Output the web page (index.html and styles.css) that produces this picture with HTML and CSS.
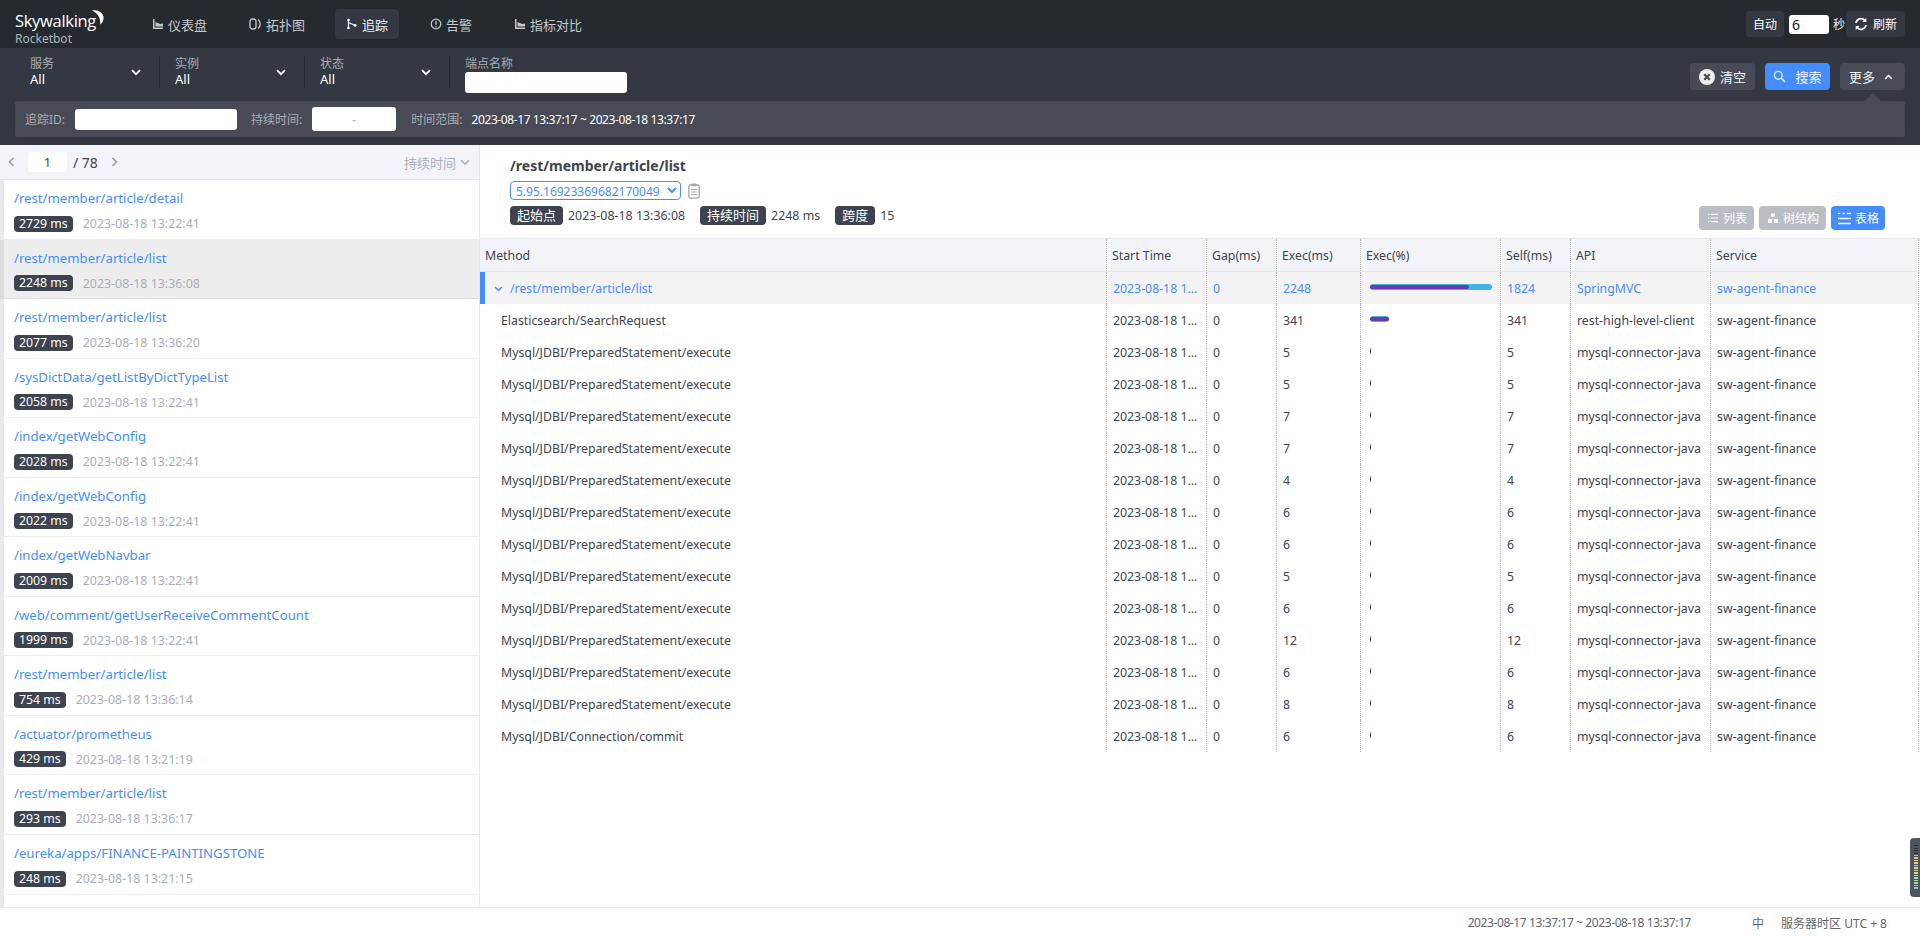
FILE: index.html
```html
<!DOCTYPE html>
<html lang="zh">
<head>
<meta charset="utf-8">
<title>Skywalking Rocketbot</title>
<link rel="stylesheet" href="styles.css">
</head>
<body>
<div class="app">
  <header class="nav">
    <div class="logo">
      <div class="logo-main">Skywalking<svg class="logo-moon" viewBox="0 0 15 15"><path d="M3 .4C8.500-.8 14.600 2.500 14.600 7.800c0 2.900-1.300 5.300-3.600 6.900C12.200 9.800 9.500 3 3 .4z" fill="#fff"/></svg></div>
      <div class="logo-sub">Rocketbot</div>
    </div>
    <nav class="nav-items">
      <a class="nav-item"><svg class="nav-icon" viewBox="0 0 12 12"><path d="M1 1v10h10v-1.600H2.500V1z M3.500 8.500V4l2.500 1 2 1 3-.5v3z" fill="currentColor"/></svg>仪表盘</a>
      <a class="nav-item nav-item-topo"><svg class="nav-icon nav-icon-topo" viewBox="0 0 12 12"><rect x="1" y="1" width="6" height="10" rx="2.600" fill="none" stroke="currentColor" stroke-width="1.300"/><path d="M9 1.500c1.800 1.500 2.200 3 2.200 4.500s-.4 3-2.200 4.500" fill="none" stroke="currentColor" stroke-width="1.300"/></svg>拓扑图</a>
      <a class="nav-item active"><svg class="nav-icon" viewBox="0 0 12 12"><path d="M2.500 1v10M2.500 4.500L8 7" fill="none" stroke="currentColor" stroke-width="1.300"/><circle cx="2.500" cy="2" r="1.300" fill="currentColor"/><circle cx="2.500" cy="10" r="1.300" fill="currentColor"/><circle cx="9" cy="7.300" r="1.500" fill="currentColor"/></svg>追踪</a>
      <a class="nav-item"><svg class="nav-icon" viewBox="0 0 12 12"><circle cx="6" cy="6" r="4.800" fill="none" stroke="currentColor" stroke-width="1.300"/><path d="M6 3v3.800M6 8v1.200" stroke="currentColor" stroke-width="1.300"/></svg>告警</a>
      <a class="nav-item"><svg class="nav-icon" viewBox="0 0 12 12"><path d="M1 1v10h10v-1.600H2.500V1z M3.500 8.500V4l2.500 1 2 1 3-.5v3z" fill="currentColor"/></svg>指标对比</a>
    </nav>
    <div class="nav-tools">
      <button class="tool-btn tool-auto">自动</button>
      <input class="auto-input" value="6">
      <span class="auto-unit">秒</span>
      <button class="tool-btn tool-refresh"><svg class="refresh-icon" viewBox="0 0 14 14"><path d="M2 6a5 5 0 0 1 8.800-2.500M12 8a5 5 0 0 1-8.800 2.500" fill="none" stroke="#fff" stroke-width="1.700"/><path d="M12.300 1v4h-4zM1.700 13V9h4z" fill="#fff"/></svg>刷新</button>
    </div>
  </header>

  <section class="filters">
    <div class="filter-row">
      <div class="filter-group">
        <div class="filter-text"><span class="filter-label">服务</span><span class="filter-value">All</span></div>
        <svg class="chev" viewBox="0 0 10 7"><path d="M1 1.200l4 4 4-4" fill="none" stroke="#fff" stroke-width="1.800"/></svg>
      </div>
      <div class="filter-group">
        <div class="filter-text"><span class="filter-label">实例</span><span class="filter-value">All</span></div>
        <svg class="chev" viewBox="0 0 10 7"><path d="M1 1.200l4 4 4-4" fill="none" stroke="#fff" stroke-width="1.800"/></svg>
      </div>
      <div class="filter-group">
        <div class="filter-text"><span class="filter-label">状态</span><span class="filter-value">All</span></div>
        <svg class="chev" viewBox="0 0 10 7"><path d="M1 1.200l4 4 4-4" fill="none" stroke="#fff" stroke-width="1.800"/></svg>
      </div>
      <div class="filter-endpoint">
        <span class="filter-label filter-label-end">端点名称</span>
        <input class="field field-endpoint">
      </div>
      <div class="filter-actions">
        <button class="act-btn"><svg class="act-icon-clear" viewBox="0 0 16 16"><circle cx="8" cy="8" r="8" fill="#eceef0"/><path d="M5.300 5.300l5.400 5.400M10.700 5.300l-5.400 5.400" stroke="#484b55" stroke-width="2.300"/></svg>清空</button>
        <button class="act-btn act-primary"><svg class="act-icon-search" viewBox="0 0 14 14"><circle cx="5.700" cy="5.700" r="4.200" fill="none" stroke="#dbe8ff" stroke-width="1.500"/><path d="M8.800 8.800l4 4" stroke="#dbe8ff" stroke-width="1.800"/></svg>搜索</button>
        <button class="act-btn act-more">更多<svg class="act-icon-up" viewBox="0 0 10 7"><path d="M1 5.800l4-4 4 4" fill="none" stroke="#fff" stroke-width="1.800"/></svg></button>
      </div>
    </div>
    <div class="more-panel">
      <span class="more-label">追踪ID:</span>
      <input class="field field-trace">
      <span class="more-label more-duration">持续时间:</span>
      <div class="field-range">-</div>
      <span class="more-label more-time">时间范围:</span>
      <span class="more-range">2023-08-17 13:37:17 ~ 2023-08-18 13:37:17</span>
    </div>
  </section>

  <main class="main">
    <aside class="list">
      <div class="pager">
        <svg class="pager-arrow" viewBox="0 0 7 10"><path d="M5.500 1l-4 4 4 4" fill="none" stroke="#9da1a8" stroke-width="1.700"/></svg>
        <input class="pager-input" value="1">
        <span class="pager-total">/ 78</span>
        <svg class="pager-arrow pager-next" viewBox="0 0 7 10"><path d="M1.500 1l4 4-4 4" fill="none" stroke="#9da1a8" stroke-width="1.700"/></svg>
        <span class="pager-sort">持续时间<svg class="pager-chev" viewBox="0 0 10 7"><path d="M1 1.200l4 4 4-4" fill="none" stroke="#a7aebb" stroke-width="1.500"/></svg></span>
      </div>
      <div class="items">
        <div class="item"><a class="item-link">/rest/member/article/detail</a><div class="item-meta"><span class="tag">2729 ms</span><span class="item-date">2023-08-18 13:22:41</span></div></div>
        <div class="item selected"><a class="item-link">/rest/member/article/list</a><div class="item-meta"><span class="tag">2248 ms</span><span class="item-date">2023-08-18 13:36:08</span></div></div>
        <div class="item"><a class="item-link">/rest/member/article/list</a><div class="item-meta"><span class="tag">2077 ms</span><span class="item-date">2023-08-18 13:36:20</span></div></div>
        <div class="item"><a class="item-link">/sysDictData/getListByDictTypeList</a><div class="item-meta"><span class="tag">2058 ms</span><span class="item-date">2023-08-18 13:22:41</span></div></div>
        <div class="item"><a class="item-link">/index/getWebConfig</a><div class="item-meta"><span class="tag">2028 ms</span><span class="item-date">2023-08-18 13:22:41</span></div></div>
        <div class="item"><a class="item-link">/index/getWebConfig</a><div class="item-meta"><span class="tag">2022 ms</span><span class="item-date">2023-08-18 13:22:41</span></div></div>
        <div class="item"><a class="item-link">/index/getWebNavbar</a><div class="item-meta"><span class="tag">2009 ms</span><span class="item-date">2023-08-18 13:22:41</span></div></div>
        <div class="item"><a class="item-link">/web/comment/getUserReceiveCommentCount</a><div class="item-meta"><span class="tag">1999 ms</span><span class="item-date">2023-08-18 13:22:41</span></div></div>
        <div class="item"><a class="item-link">/rest/member/article/list</a><div class="item-meta"><span class="tag">754 ms</span><span class="item-date">2023-08-18 13:36:14</span></div></div>
        <div class="item"><a class="item-link">/actuator/prometheus</a><div class="item-meta"><span class="tag">429 ms</span><span class="item-date">2023-08-18 13:21:19</span></div></div>
        <div class="item"><a class="item-link">/rest/member/article/list</a><div class="item-meta"><span class="tag">293 ms</span><span class="item-date">2023-08-18 13:36:17</span></div></div>
        <div class="item"><a class="item-link">/eureka/apps/FINANCE-PAINTINGSTONE</a><div class="item-meta"><span class="tag">248 ms</span><span class="item-date">2023-08-18 13:21:15</span></div></div>
        <div class="item"><a class="item-link">/rest/member/article/list</a><div class="item-meta"><span class="tag">212 ms</span><span class="item-date">2023-08-18 13:36:11</span></div></div>
      </div>
    </aside>

    <section class="detail">
      <div class="detail-head">
        <div class="detail-info">
          <h1 class="detail-title">/rest/member/article/list</h1>
          <div class="trace-select-row">
            <select class="trace-select"><option>5.95.16923369682170049</option></select>
            <svg class="clip-icon" viewBox="0 0 12 16"><rect x=".8" y="2" width="10.400" height="13.200" rx="1.500" fill="none" stroke="#a4a7ae" stroke-width="1.300"/><rect x="3.500" y=".6" width="5" height="2.600" rx=".6" fill="#a4a7ae"/><path d="M3 6.500h6M3 9h6M3 11.500h6" stroke="#a4a7ae"/></svg>
          </div>
          <div class="trace-meta">
            <span class="tag tag-head">起始点</span><span class="meta-val">2023-08-18 13:36:08</span>
            <span class="tag tag-head">持续时间</span><span class="meta-val">2248 ms</span>
            <span class="tag tag-head">跨度</span><span class="meta-val">15</span>
          </div>
        </div>
        <div class="view-tabs">
          <button class="view-tab"><svg class="tab-icon" viewBox="0 0 11 11"><path d="M0 1.500h1.500M3 1.500h8M0 5.500h1.500M3 5.500h8M0 9.500h1.500M3 9.500h8" stroke="#fff" stroke-width="1.200"/></svg>列表</button>
          <button class="view-tab"><svg class="tab-icon" viewBox="0 0 11 11"><path d="M3.500.5h4v3.500h-4zM0 6.500h4.500V11H0zM6.500 6.500H11V11H6.500z" fill="#fff"/></svg>树结构</button>
          <button class="view-tab view-tab-active"><svg class="tab-icon tab-icon-lg" viewBox="0 0 14 14"><path d="M0 1.500h2.500M5 1.500h2M9.500 1.500H14M0 7h14M0 12.500h14" stroke="#fff" stroke-width="1.600"/></svg>表格</button>
        </div>
      </div>
      <div class="table">
        <div class="t-row t-head"><div class="cell cell-h">Method</div><div class="cell cell-h">Start Time</div><div class="cell cell-h">Gap(ms)</div><div class="cell cell-h">Exec(ms)</div><div class="cell cell-h">Exec(%)</div><div class="cell cell-h">Self(ms)</div><div class="cell cell-h">API</div><div class="cell cell-h">Service</div></div>
        <div class="t-row t-root"><div class="cell method-root"><svg class="root-chev" viewBox="0 0 10 7"><path d="M1 1.200l4 4 4-4" fill="none" stroke="#448dfe" stroke-width="1.700"/></svg>/rest/member/article/list</div><div class="cell">2023-08-18 13:36:08</div><div class="cell">0</div><div class="cell">2248</div><div class="cell cell-bar"><div class="bar"><div class="bar-self bar-w-root"></div></div></div><div class="cell">1824</div><div class="cell">SpringMVC</div><div class="cell">sw-agent-finance</div></div>
        <div class="t-row"><div class="cell method">Elasticsearch/SearchRequest</div><div class="cell">2023-08-18 13:36:08</div><div class="cell">0</div><div class="cell">341</div><div class="cell cell-bar"><div class="bar bar-mid"><div class="bar-self bar-w-full"></div></div></div><div class="cell">341</div><div class="cell">rest-high-level-client</div><div class="cell">sw-agent-finance</div></div>
        <div class="t-row"><div class="cell method">Mysql/JDBI/PreparedStatement/execute</div><div class="cell">2023-08-18 13:36:08</div><div class="cell">0</div><div class="cell">5</div><div class="cell cell-bar"><div class="bar bar-tiny"><div class="bar-self bar-w-full"></div></div></div><div class="cell">5</div><div class="cell">mysql-connector-java</div><div class="cell">sw-agent-finance</div></div>
        <div class="t-row"><div class="cell method">Mysql/JDBI/PreparedStatement/execute</div><div class="cell">2023-08-18 13:36:08</div><div class="cell">0</div><div class="cell">5</div><div class="cell cell-bar"><div class="bar bar-tiny"><div class="bar-self bar-w-full"></div></div></div><div class="cell">5</div><div class="cell">mysql-connector-java</div><div class="cell">sw-agent-finance</div></div>
        <div class="t-row"><div class="cell method">Mysql/JDBI/PreparedStatement/execute</div><div class="cell">2023-08-18 13:36:08</div><div class="cell">0</div><div class="cell">7</div><div class="cell cell-bar"><div class="bar bar-tiny"><div class="bar-self bar-w-full"></div></div></div><div class="cell">7</div><div class="cell">mysql-connector-java</div><div class="cell">sw-agent-finance</div></div>
        <div class="t-row"><div class="cell method">Mysql/JDBI/PreparedStatement/execute</div><div class="cell">2023-08-18 13:36:08</div><div class="cell">0</div><div class="cell">7</div><div class="cell cell-bar"><div class="bar bar-tiny"><div class="bar-self bar-w-full"></div></div></div><div class="cell">7</div><div class="cell">mysql-connector-java</div><div class="cell">sw-agent-finance</div></div>
        <div class="t-row"><div class="cell method">Mysql/JDBI/PreparedStatement/execute</div><div class="cell">2023-08-18 13:36:08</div><div class="cell">0</div><div class="cell">4</div><div class="cell cell-bar"><div class="bar bar-tiny"><div class="bar-self bar-w-full"></div></div></div><div class="cell">4</div><div class="cell">mysql-connector-java</div><div class="cell">sw-agent-finance</div></div>
        <div class="t-row"><div class="cell method">Mysql/JDBI/PreparedStatement/execute</div><div class="cell">2023-08-18 13:36:08</div><div class="cell">0</div><div class="cell">6</div><div class="cell cell-bar"><div class="bar bar-tiny"><div class="bar-self bar-w-full"></div></div></div><div class="cell">6</div><div class="cell">mysql-connector-java</div><div class="cell">sw-agent-finance</div></div>
        <div class="t-row"><div class="cell method">Mysql/JDBI/PreparedStatement/execute</div><div class="cell">2023-08-18 13:36:08</div><div class="cell">0</div><div class="cell">6</div><div class="cell cell-bar"><div class="bar bar-tiny"><div class="bar-self bar-w-full"></div></div></div><div class="cell">6</div><div class="cell">mysql-connector-java</div><div class="cell">sw-agent-finance</div></div>
        <div class="t-row"><div class="cell method">Mysql/JDBI/PreparedStatement/execute</div><div class="cell">2023-08-18 13:36:08</div><div class="cell">0</div><div class="cell">5</div><div class="cell cell-bar"><div class="bar bar-tiny"><div class="bar-self bar-w-full"></div></div></div><div class="cell">5</div><div class="cell">mysql-connector-java</div><div class="cell">sw-agent-finance</div></div>
        <div class="t-row"><div class="cell method">Mysql/JDBI/PreparedStatement/execute</div><div class="cell">2023-08-18 13:36:08</div><div class="cell">0</div><div class="cell">6</div><div class="cell cell-bar"><div class="bar bar-tiny"><div class="bar-self bar-w-full"></div></div></div><div class="cell">6</div><div class="cell">mysql-connector-java</div><div class="cell">sw-agent-finance</div></div>
        <div class="t-row"><div class="cell method">Mysql/JDBI/PreparedStatement/execute</div><div class="cell">2023-08-18 13:36:08</div><div class="cell">0</div><div class="cell">12</div><div class="cell cell-bar"><div class="bar bar-tiny"><div class="bar-self bar-w-full"></div></div></div><div class="cell">12</div><div class="cell">mysql-connector-java</div><div class="cell">sw-agent-finance</div></div>
        <div class="t-row"><div class="cell method">Mysql/JDBI/PreparedStatement/execute</div><div class="cell">2023-08-18 13:36:08</div><div class="cell">0</div><div class="cell">6</div><div class="cell cell-bar"><div class="bar bar-tiny"><div class="bar-self bar-w-full"></div></div></div><div class="cell">6</div><div class="cell">mysql-connector-java</div><div class="cell">sw-agent-finance</div></div>
        <div class="t-row"><div class="cell method">Mysql/JDBI/PreparedStatement/execute</div><div class="cell">2023-08-18 13:36:08</div><div class="cell">0</div><div class="cell">8</div><div class="cell cell-bar"><div class="bar bar-tiny"><div class="bar-self bar-w-full"></div></div></div><div class="cell">8</div><div class="cell">mysql-connector-java</div><div class="cell">sw-agent-finance</div></div>
        <div class="t-row"><div class="cell method">Mysql/JDBI/Connection/commit</div><div class="cell">2023-08-18 13:36:08</div><div class="cell">0</div><div class="cell">6</div><div class="cell cell-bar"><div class="bar bar-tiny"><div class="bar-self bar-w-full"></div></div></div><div class="cell">6</div><div class="cell">mysql-connector-java</div><div class="cell">sw-agent-finance</div></div>
      </div>
    </section>
  </main>

  <footer class="footer">
    <span class="foot-range">2023-08-17 13:37:17 ~ 2023-08-18 13:37:17</span>
    <span class="foot-lang">中</span>
    <span class="foot-zone">服务器时区 UTC + 8</span>
  </footer>

  <div class="meter"><div class="meter-bars"></div></div>
</div>
</body>
</html>
```

FILE: styles.css
```css
* { box-sizing: border-box; }
html, body { margin: 0; height: 100%; }
body {
  font-family: "Noto Sans", "Noto Sans CJK SC", sans-serif;
  font-size: 12px;
  color: #3d444f;
  background: #fff;
  overflow: hidden;
}
button, input, select { font-family: inherit; }
button { border: 0; cursor: pointer; }
.app { position: relative; display: flex; flex-direction: column; height: 937px; }

/* top nav */
.nav { display: flex; align-items: center; height: 48px; background: #252a2f; flex: none; padding-left: 15px; }
.logo { width: 126px; height: 48px; padding-top: 10px; }
.logo-main { display: flex; align-items: flex-start; height: 22px; font-family: "Open Sans", sans-serif; font-size: 16.5px; line-height: 22px; letter-spacing: -.3px; color: #fff; }
.logo-moon { width: 15px; height: 15px; margin-left: -7px; flex: none; }
.logo-sub { font-size: 12px; line-height: 13px; color: #aeb4bc; }
.nav-items { display: flex; gap: 20px; }
.nav-item { display: flex; align-items: center; height: 30px; padding: 0 11px; border-radius: 4px; font-size: 13px; color: #c5c8cc; white-space: nowrap; }
.nav-item-topo { padding-right: 10px; }
.nav-item.active { background: #333842; color: #eef0f3; }
.nav-icon { width: 12px; height: 12px; margin-right: 4px; flex: none; }
.nav-icon-topo { margin-right: 5px; }
.nav-tools { display: flex; align-items: center; margin-left: auto; padding-right: 15px; color: #e8eaed; }
.tool-btn { display: flex; align-items: center; height: 26px; border-radius: 4px; background: #333842; color: #fff; font-size: 12px; }
.tool-auto { width: 38px; justify-content: center; padding: 0; }
.auto-input { width: 40px; height: 19px; margin-left: 5px; padding: 0 3px; border: 0; border-radius: 3px; background: #fff; color: #111; font-size: 14px; }
.auto-unit { margin-left: 4px; font-size: 12px; width: 13px; }
.tool-refresh { width: 59px; padding: 0 0 0 8px; }
.refresh-icon { width: 14px; height: 14px; margin-right: 5px; }

/* filter bar */
.filters { height: 97px; flex: none; background: #333842; }
.filter-row { display: flex; height: 53px; padding: 8px 15px 0; }
.filter-group { display: flex; align-items: center; justify-content: space-between; width: 145px; height: 32px; padding: 0 18px 0 15px; border-right: 1px solid #252a2f; }
.filter-text { display: flex; flex-direction: column; }
.filter-label { font-size: 12px; line-height: 15px; color: #a9adb4; }
.filter-label-end { line-height: 16px; }
.filter-value { font-size: 13px; line-height: 17px; color: #fff; }
.chev { width: 10px; height: 7px; }
.filter-endpoint { display: flex; flex-direction: column; padding-left: 15px; }
.field { display: block; border: 0; border-radius: 3px; background: #fff; }
.field-endpoint { width: 162px; height: 21px; }
.filter-actions { display: flex; gap: 10px; margin-left: auto; padding-top: 7px; }
.act-btn { position: relative; display: flex; align-items: center; justify-content: center; width: 65px; height: 27px; padding: 0; border-radius: 4px; background: #484b55; color: #f3f4f6; font-size: 13px; }
.act-primary { background: #448dfe; }
.act-icon-clear { width: 16px; height: 16px; margin-right: 5px; }
.act-icon-search { width: 13px; height: 13px; margin-right: 9px; }
.act-more { justify-content: flex-start; padding-left: 9px; }
.act-icon-up { width: 9px; height: 6px; margin-left: 9px; }
.act-more::after { content: ""; position: absolute; left: 50%; bottom: -11px; margin-left: -8px; border: 8px solid transparent; border-top: 0; border-bottom-color: #484b55; }
.more-panel { display: flex; align-items: center; height: 36px; margin: 0 15px; padding-left: 10px; border-radius: 3px; background: #484b55; font-size: 12px; }
.more-label { color: #a9adb4; white-space: nowrap; }
.field-trace { width: 162px; height: 21px; margin-left: 10px; }
.more-duration { margin-left: 14px; }
.field-range { width: 84px; height: 24px; margin-left: 10px; border-radius: 3px; background: #fff; color: #a7aebb; line-height: 26px; text-align: center; }
.more-time { margin-left: 15px; }
.more-range { margin-left: 9px; color: #fff; font-size: 12px; letter-spacing: -.4px; white-space: nowrap; }

/* body */
.main { display: flex; flex: 1; min-height: 0; }
.list { display: flex; flex-direction: column; width: 480px; flex: none; border-right: 1px solid #e4e6eb; }
.pager { display: flex; align-items: center; height: 35px; flex: none; padding: 0 9px 0 8px; background: #f3f4f9; border-bottom: 1px solid #e4e6eb; }
.pager-arrow { width: 7px; height: 10px; flex: none; }
.pager-input { width: 39px; height: 20px; margin-left: 13px; border: 0; border-radius: 3px; background: #fff; color: #3d444f; font-size: 13px; text-align: center; padding: 0; }
.pager-total { margin-left: 6px; font-size: 14px; width: 38px; white-space: nowrap; }
.pager-sort { display: flex; align-items: center; margin-left: auto; color: #a7aebb; font-size: 13px; }
.pager-chev { width: 10px; height: 7px; margin-left: 4px; }
.items { flex: 1; min-height: 0; overflow: hidden; }
.item { height: 59.55px; padding: 8px 14px 0 10px; border-left: 4px solid #e9e9e9; border-bottom: 1px solid #ececec; background: #fff; }
.item.selected { background: #ededed; border-left-color: #dcdcdc; border-bottom-color: #dfdfdf; }
.item-link { display: block; font-size: 13.2px; line-height: 20px; color: #448dfe; white-space: nowrap; }
.item-meta { display: flex; align-items: center; margin-top: 7px; }
.tag { display: inline-block; padding: 0 5px; border-radius: 4px; background: #3d444f; color: #fff; font-size: 12.3px; line-height: 16px; white-space: nowrap; }
.item-date { margin-left: 10px; font-size: 12.4px; color: #a7aebb; white-space: nowrap; }

/* detail */
.detail { display: flex; flex-direction: column; flex: 1; min-width: 0; }
.detail-head { display: flex; justify-content: space-between; align-items: flex-end; height: 93px; flex: none; padding: 11px 35px 8px 30px; }
.detail-info { align-self: flex-start; }
.detail-title { margin: 0; font-size: 14px; line-height: 20px; font-weight: 700; color: #3d444f; }
.trace-select-row { display: flex; align-items: center; margin-top: 5px; }
.trace-select { width: 171px; height: 19px; padding: 0 1px; border: 1px solid #448dfe; border-radius: 4px; background: #fff; color: #448dfe; font-size: 12px; }
.clip-icon { width: 12px; height: 16px; margin-left: 7px; }
.trace-meta { display: flex; align-items: center; margin-top: 6px; }
.tag-head { padding: 0 7px; line-height: 19px; font-size: 13px; }
.meta-val { margin: 0 15px 0 5px; font-size: 12.4px; white-space: nowrap; }
.view-tabs { display: flex; gap: 5px; }
.view-tab { display: flex; align-items: center; height: 24px; padding: 0 7px 0 9px; border-radius: 4px; background: #babdc4; color: #fff; font-size: 12px; white-space: nowrap; }
.view-tab-active { background: #448dfe; padding: 0 6px 0 7px; }
.tab-icon { width: 10px; height: 10px; margin-right: 5px; }
.tab-icon-lg { width: 13px; height: 13px; margin-right: 4px; }

.table { flex: none; }
.t-row { display: grid; grid-template-columns: 627px 100px 70px 84px 140px 70px 140px 208px; height: 32px; }
.t-head { height: 34px; background: #f3f4f9; border-top: 1px solid #e4e6eb; border-bottom: 1px solid #e4e6eb; }
.cell { display: block; min-width: 0; padding: 0 7px 0 6px; border-right: 1px dotted #b8b8b8; font-size: 12.3px; line-height: 34px; white-space: nowrap; overflow: hidden; text-overflow: ellipsis; }
.cell-h { padding-left: 5px; }
.cell-bar { display: flex; align-items: center; }
.method { padding-left: 21px; }
.method-root { display: flex; align-items: center; padding-top: 2px; padding-left: 9px; border-left: 5px solid #448dfe; }
.root-chev { width: 9px; height: 6px; margin-right: 7px; flex: none; }
.t-root { background: #f3f3f3; color: #448dfe; }
.bar { position: relative; width: 122px; height: 6px; margin: -2px 0 0 3px; border-radius: 3px; background: #40b5e5; flex: none; }
.bar-self { height: 4px; position: relative; top: 1px; border-radius: 2px; background: #6a3bad; }
.bar-w-root { width: 81%; }
.bar-w-full { width: 100%; }
.bar-mid { width: 19px; }
.bar-tiny { width: 1px; }

/* footer */
.footer { display: flex; align-items: center; justify-content: flex-end; height: 30px; flex: none; padding-right: 33px; border-top: 1px solid #e8e8e8; background: #fff; color: #5f6670; font-size: 12px; }
.foot-range { letter-spacing: -.4px; white-space: nowrap; }
.foot-lang { margin-left: 61px; }
.foot-zone { margin-left: 17px; white-space: nowrap; }

/* floating level meter */
.meter { position: absolute; right: 0; top: 838px; width: 10px; height: 59px; padding: 7px 2px 7px 4px; border-radius: 4px 0 0 4px; background: #4f5560; }
.meter-bars { width: 4px; height: 45px; background: repeating-linear-gradient(180deg, transparent 0 1px, #4f5560 1px 2.5px), linear-gradient(180deg, #2c3038 0 22%, #efb866 22%, #e8dd72 50%, #a7e08a 75%, #67d8c2 100%); }
```
